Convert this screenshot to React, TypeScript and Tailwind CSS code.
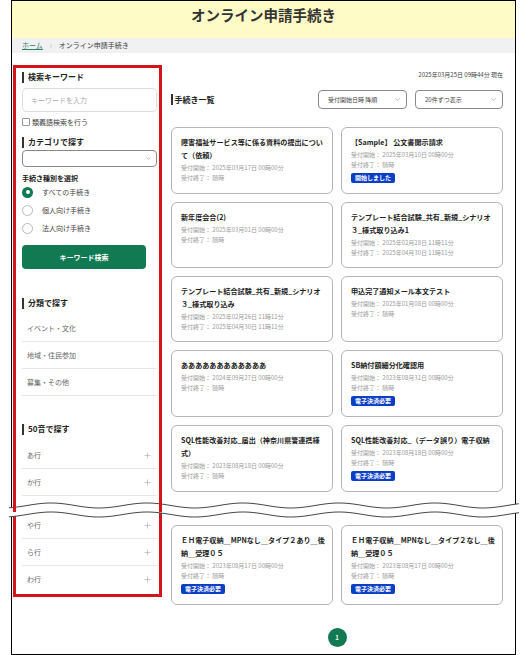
import type { ReactNode } from 'react';
import { ChevronDown, ChevronRight, Plus } from 'lucide-react';

type Proc = { title: string[]; start: string; end: string; badge?: string };

const topCards: Proc[] = [
  { title: ['障害福祉サービス等に係る資料の提出につい', 'て（依頼）'], start: '2025年03月17日 00時00分', end: '随時' },
  { title: ['【Sample】 公文書開示請求'], start: '2025年03月10日 00時00分', end: '随時', badge: '開始しました' },
  { title: ['新年度会合(2)'], start: '2025年03月01日 00時00分', end: '随時' },
  { title: ['テンプレート結合試験_共有_新規_シナリオ', '３_様式取り込み1'], start: '2025年02月28日 11時11分', end: '2025年04月30日 11時11分' },
  { title: ['テンプレート結合試験_共有_新規_シナリオ', '３_様式取り込み'], start: '2025年02月26日 11時11分', end: '2025年04月30日 11時11分' },
  { title: ['申込完了通知メール本文テスト'], start: '2025年01月08日 00時00分', end: '随時' },
  { title: ['ああああああああああああ'], start: '2024年09月27日 00時00分', end: '随時' },
  { title: ['SB納付額細分化確認用'], start: '2023年08月31日 00時00分', end: '随時', badge: '電子決済必要' },
  { title: ['SQL性能改善対応_届出（神奈川県警連携様', '式）'], start: '2023年08月18日 00時00分', end: '随時' },
  { title: ['SQL性能改善対応_（データ誤り）電子収納'], start: '2023年08月18日 00時00分', end: '随時', badge: '電子決済必要' },
];

const bottomCards: Proc[] = [
  { title: ['ＥＨ電子収納＿MPNなし＿タイプ２あり＿後', '納＿受理０５'], start: '2023年08月17日 00時00分', end: '随時', badge: '電子決済必要' },
  { title: ['ＥＨ電子収納＿MPNなし＿タイプ２なし＿後', '納＿受理０５'], start: '2023年08月17日 00時00分', end: '随時', badge: '電子決済必要' },
];

function wave(y0: number, w: number) {
  const pts: string[] = [];
  for (let x = 0; x <= w; x += 2) {
    pts.push(`${x},${(y0 + 2.5 * Math.sin((2 * Math.PI * (x + 30)) / 96)).toFixed(2)}`);
  }
  return pts;
}

function Heading({ children }: { children: ReactNode }) {
  return (
    <div className="flex h-[12px] items-center gap-[4px]">
      <span className="h-[11px] w-[2px] bg-[#333]" />
      <span className="text-[8px] font-bold leading-[12px] text-[#222]">{children}</span>
    </div>
  );
}

function LinkRow({ label, plus, last }: { label: string; plus?: boolean; last?: boolean }) {
  return (
    <div
      className={
        last
          ? 'flex h-[27px] items-center justify-between pl-[5px] pr-[5px] text-[7px] text-[#666]'
          : 'flex h-[27px] items-center justify-between border-b border-[#e6e6e6] pl-[5px] pr-[5px] text-[7px] text-[#666]'
      }
    >
      <span>{label}</span>
      {plus && <Plus size={9} strokeWidth={1.2} color="#888" />}
    </div>
  );
}

function Radio({ label, checked }: { label: string; checked?: boolean }) {
  return (
    <div className="flex h-[18px] items-center gap-[9px]">
      {checked ? (
        <span className="flex h-[11px] w-[11px] items-center justify-center rounded-full bg-[#117a53]">
          <span className="h-[4px] w-[4px] rounded-full bg-white" />
        </span>
      ) : (
        <span className="h-[11px] w-[11px] rounded-full border border-[#bbb] bg-white" />
      )}
      <span className="text-[7px] text-[#444]">{label}</span>
    </div>
  );
}

function Card({ p }: { p: Proc }) {
  return (
    <div className="rounded-[6px] border border-[#b5b5b5] bg-white pb-[10px] pl-[9px] pr-[6px] pt-[8px]">
      <div className="text-[7.1px] font-bold leading-[13px] text-[#222]">
        {p.title.map((l) => (
          <div key={l} className="whitespace-nowrap">
            {l}
          </div>
        ))}
      </div>
      <div className="mt-[1px] text-[6px] leading-[9.5px] text-[#9a9a9a]">
        <div>受付開始： {p.start}</div>
        <div>受付終了： {p.end}</div>
      </div>
      {p.badge && (
        <div className="mt-[4px] flex">
          <span className="h-[10px] rounded-[2px] bg-[#0b3ec6] px-[4px] text-[6px] font-bold leading-[10px] text-white">
            {p.badge}
          </span>
        </div>
      )}
    </div>
  );
}

function SmallSelect({ label, width }: { label: string; width: string }) {
  return (
    <div className={`flex h-[19px] items-center justify-between rounded-[4px] border border-[#8a8a8a] pl-[9px] pr-[5px] ${width}`}>
      <span className="text-[6px] text-[#444]">{label}</span>
      <ChevronDown size={7} strokeWidth={1.5} color="#666" />
    </div>
  );
}

export default function App() {
  const upper = wave(5.5, 510);
  const lower = wave(14.5, 510);
  const fill = upper.concat([...lower].reverse()).join(' ');

  return (
    <div className="h-[655px] w-[529px] overflow-hidden bg-white font-['Noto_Sans_CJK_JP','Noto_Sans',sans-serif]">
      <div className="ml-[11px] h-[655px] w-[505px] border border-black">
        {/* header */}
        <div className="flex h-[37px] justify-center bg-[#fffbc6] pt-[4px]">
          <h1 className="text-[14.5px] font-bold leading-[20px] text-[#333]">オンライン申請手続き</h1>
        </div>
        <div className="flex h-[15px] items-center bg-[#f1f1f1] pl-[10px] text-[7px] text-[#444]">
          <span className="text-[#2a7f73] underline">ホーム</span>
          <ChevronRight size={6} strokeWidth={1.5} color="#888" className="mx-[5px]" />
          <span>オンライン申請手続き</span>
        </div>

        {/* upper part */}
        <div className="mt-[12px] flex items-start">
          <aside className="ml-[1px] w-[149px] border-x-[3px] border-t-[3px] border-[#d3151b] pl-[6px] pr-[2px] pt-[3px]">
            <Heading>検索キーワード</Heading>
            <input
              className="mt-[5px] h-[24px] w-full rounded-[4px] border border-[#dedede] pl-[8px] text-[7px] outline-none placeholder:text-[#aaa]"
              placeholder="キーワードを入力"
            />
            <div className="mt-[5px] flex h-[10px] items-center gap-[2px]">
              <span className="h-[8px] w-[8px] rounded-[1px] border border-[#999] bg-white" />
              <span className="text-[7px] text-[#444]">類義語検索を行う</span>
            </div>
            <div className="mt-[9px]">
              <Heading>カテゴリで探す</Heading>
            </div>
            <div className="mt-[2px] flex h-[17px] items-center justify-end rounded-[4px] border border-[#8a8a8a] pr-[4px]">
              <ChevronDown size={7} strokeWidth={1.5} color="#666" />
            </div>
            <div className="mt-[6px] text-[7px] font-bold leading-[10px] text-[#222]">手続き種別を選択</div>
            <Radio label="すべての手続き" checked />
            <Radio label="個人向け手続き" />
            <Radio label="法人向け手続き" />
            <button className="mt-[8px] flex h-[24px] w-[124px] items-center justify-center rounded-[4px] bg-[#117a53] text-[7px] font-bold text-white">
              キーワード検索
            </button>
            <div className="mt-[28px]">
              <Heading>分類で探す</Heading>
            </div>
            <div className="mt-[6px]">
              <LinkRow label="イベント・文化" />
              <LinkRow label="地域・住民参加" />
              <LinkRow label="募集・その他" />
            </div>
            <div className="mt-[27px]">
              <Heading>50音で探す</Heading>
            </div>
            <div className="mt-[7px]">
              <LinkRow label="あ行" plus />
              <LinkRow label="か行" plus />
            </div>
          </aside>

          <main className="ml-[9px] w-[332px] pt-[5px]">
            <div className="text-right text-[6px] leading-[10px] text-[#444]">2025年03月25日 09時44分 現在</div>
            <div className="mt-[10px] flex h-[19px] items-center justify-between">
              <div className="flex items-center gap-[2px]">
                <span className="h-[11px] w-[1.5px] bg-[#333]" />
                <span className="text-[8px] font-bold text-[#222]">手続き一覧</span>
              </div>
              <div className="flex gap-[8px]">
                <SmallSelect label="受付開始日時 降順" width="w-[89px]" />
                <SmallSelect label="20件ずつ表示" width="w-[88px]" />
              </div>
            </div>
            <div className="mt-[18px] grid grid-cols-2 gap-[8px]">
              {topCards.map((p, i) => (
                <Card key={i} p={p} />
              ))}
            </div>
          </main>
        </div>

        {/* page break */}
        <div className="relative flex h-[16px]">
          <svg className="absolute left-[-3px] top-[4px]" width="510" height="20" viewBox="0 0 510 20">
            <polygon points={fill} fill="#fff" />
            <polyline points={upper.join(' ')} fill="none" stroke="#333" strokeWidth="0.9" />
            <polyline points={lower.join(' ')} fill="none" stroke="#333" strokeWidth="0.9" />
          </svg>
          <div className="relative z-10 ml-[1px] w-[149px] border-x-[3px] border-[#d3151b]" />
        </div>

        {/* lower part */}
        <div className="flex items-start">
          <aside className="ml-[1px] w-[149px] border-x-[3px] border-b-[3px] border-[#d3151b] pb-[1px] pl-[6px] pr-[2px]">
            <LinkRow label="や行" plus />
            <LinkRow label="ら行" plus />
            <LinkRow label="わ行" plus last />
          </aside>
          <main className="ml-[9px] w-[332px] pt-[13px]">
            <div className="grid grid-cols-2 gap-[8px]">
              {bottomCards.map((p, i) => (
                <Card key={i} p={p} />
              ))}
            </div>
            <div className="mx-auto mt-[23px] flex h-[19px] w-[19px] items-center justify-center rounded-full bg-[#117a53] text-[6px] font-bold text-white">
              1
            </div>
          </main>
        </div>
      </div>
    </div>
  );
}
